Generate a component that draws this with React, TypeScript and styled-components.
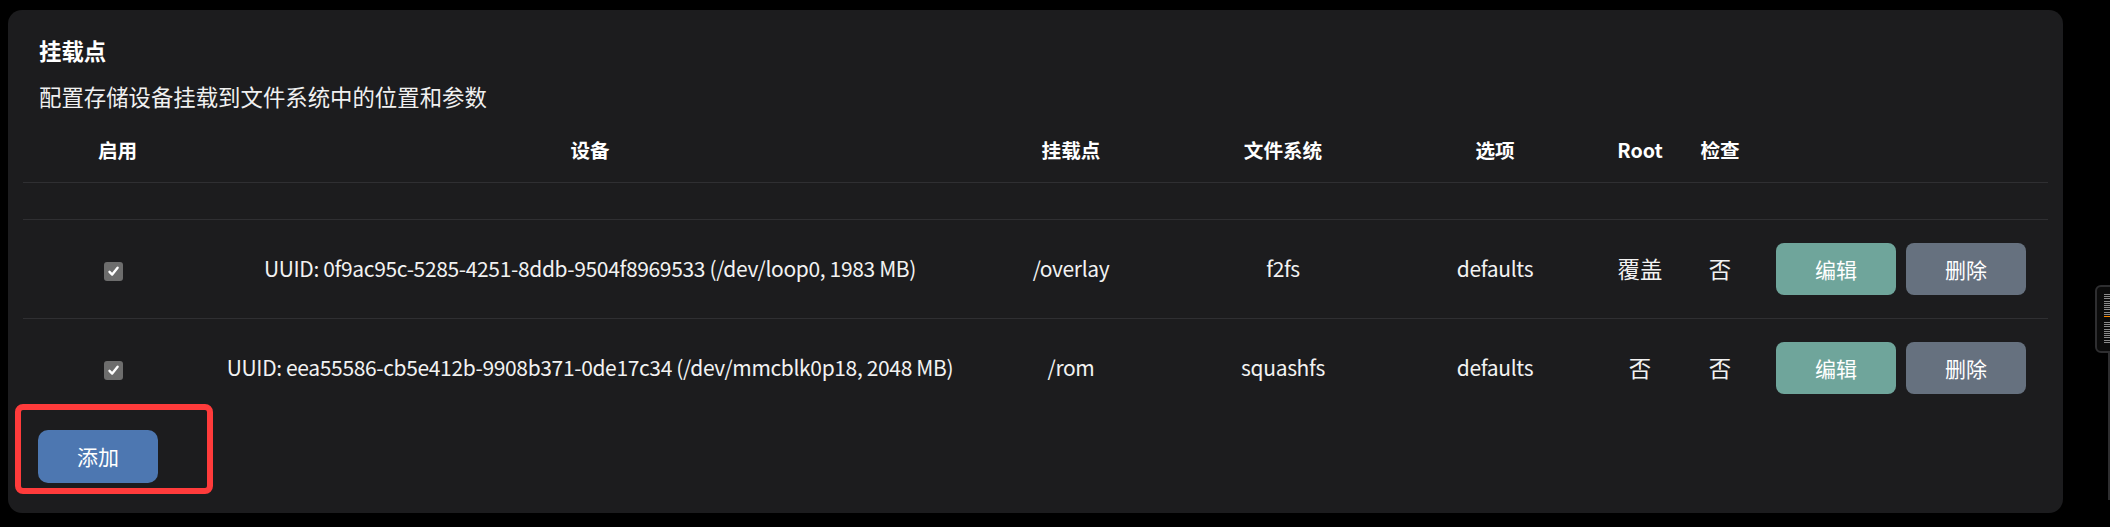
import React from "react";
import styled, { createGlobalStyle } from "styled-components";

const GlobalStyle = createGlobalStyle`
  html, body {
    margin: 0;
    padding: 0;
    background: #000;
  }
  body {
    font-family: "Noto Sans CJK SC", "Noto Sans", sans-serif;
    color: #f2f2f2;
    width: 2110px;
    height: 527px;
    overflow: hidden;
  }
`;

const Page = styled.div`
  position: relative;
  width: 2110px;
  height: 527px;
  padding: 10px 0 0 8px;
  box-sizing: border-box;
`;

const Card = styled.section`
  position: relative;
  width: 2055px;
  box-sizing: border-box;
  background: #1c1c1e;
  border-radius: 14px;
  padding: 24px 15px 30px 15px;
`;

const Title = styled.h3`
  margin: 0;
  padding-left: 16px;
  font-size: 22.4px;
  line-height: 1.5;
  font-weight: 700;
  color: #fff;
`;

const Subtitle = styled.p`
  margin: 12px 0 0 0;
  padding-left: 16px;
  font-size: 22.4px;
  line-height: 1.5;
  color: #f0f0f0;
`;

const Table = styled.table`
  margin-top: 6px;
  width: 2025px;
  table-layout: fixed;
  border-collapse: separate;
  border-spacing: 0;
`;

const Th = styled.th`
  padding: 16px 0 17px 0;
  font-size: 19.6px;
  line-height: 1.5;
  font-weight: 700;
  color: #fff;
  text-align: center;
  border-bottom: 1px solid #2f2f32;
`;

const EmptyCell = styled.td`
  height: 36px;
  padding: 0;
  border-bottom: 1px solid #2f2f32;
`;

// latin cells use a slightly tighter size, the reference renders them narrow
const Td = styled.td<{ $last?: boolean; $latin?: boolean }>`
  padding: 23px 0;
  height: 52px;
  font-size: ${(p) => (p.$latin ? "21px" : "22.4px")};
  letter-spacing: ${(p) => (p.$latin ? "-0.35px" : "normal")};
  line-height: 1.5;
  text-align: center;
  vertical-align: middle;
  white-space: nowrap;
  color: #f2f2f2;
  border-bottom: ${(p) => (p.$last ? "none" : "1px solid #2f2f32")};
`;

const ActionCell = styled(Td)`
  text-align: left;
  padding-left: 18px;
`;

const Actions = styled.div`
  display: flex;
  gap: 10px;
`;

const Check = styled.span`
  display: inline-flex;
  align-items: center;
  justify-content: center;
  width: 19px;
  height: 19px;
  margin-right: 9px;
  border-radius: 3px;
  background: #6d6d6d;
  vertical-align: middle;
`;

const Button = styled.button<{ $tone: "edit" | "remove" | "add" }>`
  width: 120px;
  height: 52px;
  border: none;
  border-radius: ${(p) => (p.$tone === "add" ? "10px" : "8px")};
  font-family: inherit;
  font-size: 21px;
  color: #fff;
  cursor: pointer;
  background: ${(p) =>
    p.$tone === "edit" ? "#6fa59b" : p.$tone === "remove" ? "#66717f" : "#4d77b1"};
`;

const Footer = styled.div`
  margin-top: 13px;
  padding-left: 15px;
`;

const AddButton = styled(Button)`
  height: 53px;
`;

const Highlight = styled.div`
  position: absolute;
  left: 7px;
  top: 394px;
  width: 198px;
  height: 90px;
  box-sizing: border-box;
  border: 6px solid #ff3b3b;
  border-radius: 8px;
  pointer-events: none;
`;

const Minimap = styled.div`
  position: absolute;
  left: 2095px;
  top: 285px;
  width: 30px;
  height: 68px;
  box-sizing: border-box;
  border: 2px solid #2e2e30;
  border-radius: 6px;
  background: #0b0b0b;
`;

const Ticks = styled.div<{ $top: number; $height: number }>`
  position: absolute;
  left: 7px;
  top: ${(p) => p.$top}px;
  width: 6px;
  height: ${(p) => p.$height}px;
  background: repeating-linear-gradient(
    to bottom,
    #8a8a8a 0px,
    #8a8a8a 1px,
    transparent 1px,
    transparent 2.2px
  );
`;

const Marker = styled.div`
  position: absolute;
  left: 7px;
  top: 29px;
  width: 6px;
  height: 1px;
  background: #ff8a00;
`;

const Rail = styled.div`
  position: absolute;
  left: 2108px;
  top: 353px;
  width: 2px;
  height: 147px;
  background: #2e2e30;
`;

const CheckMark = () => (
  <svg width="13" height="13" viewBox="0 0 13 13">
    <path d="M2.5 6.8 L5.2 9.6 L10.6 2.8" fill="none" stroke="#fff" strokeWidth="2.4" strokeLinecap="round" strokeLinejoin="round" />
  </svg>
);

interface Mount {
  device: string;
  target: string;
  fs: string;
  options: string;
  root: string;
  check: string;
}

const mounts: Mount[] = [
  {
    device: "UUID: 0f9ac95c-5285-4251-8ddb-9504f8969533 (/dev/loop0, 1983 MB)",
    target: "/overlay",
    fs: "f2fs",
    options: "defaults",
    root: "覆盖",
    check: "否",
  },
  {
    device: "UUID: eea55586-cb5e412b-9908b371-0de17c34 (/dev/mmcblk0p18, 2048 MB)",
    target: "/rom",
    fs: "squashfs",
    options: "defaults",
    root: "否",
    check: "否",
  },
];

const colWidths = [189, 756, 206, 218, 206, 84, 76, 290];

const App = () => {
  return (
    <Page>
      <GlobalStyle />
      <Card>
        <Title>挂载点</Title>
        <Subtitle>配置存储设备挂载到文件系统中的位置和参数</Subtitle>
        <Table>
          <colgroup>
            {colWidths.map((w, i) => (
              <col key={i} style={{ width: w }} />
            ))}
          </colgroup>
          <thead>
            <tr>
              <Th>启用</Th>
              <Th>设备</Th>
              <Th>挂载点</Th>
              <Th>文件系统</Th>
              <Th>选项</Th>
              <Th>Root</Th>
              <Th>检查</Th>
              <Th></Th>
            </tr>
          </thead>
          <tbody>
            <tr>
              <EmptyCell colSpan={8} />
            </tr>
            {mounts.map((m, i) => {
              const last = i === mounts.length - 1;
              return (
                <tr key={m.device}>
                  <Td $last={last}>
                    <Check>
                      <CheckMark />
                    </Check>
                  </Td>
                  <Td $last={last} $latin>{m.device}</Td>
                  <Td $last={last} $latin>{m.target}</Td>
                  <Td $last={last} $latin>{m.fs}</Td>
                  <Td $last={last} $latin>{m.options}</Td>
                  <Td $last={last}>{m.root}</Td>
                  <Td $last={last}>{m.check}</Td>
                  <ActionCell $last={last}>
                    <Actions>
                      <Button $tone="edit">编辑</Button>
                      <Button $tone="remove">删除</Button>
                    </Actions>
                  </ActionCell>
                </tr>
              );
            })}
          </tbody>
        </Table>
        <Footer>
          <AddButton $tone="add">添加</AddButton>
        </Footer>
        <Highlight />
      </Card>
      <Minimap>
        <Ticks $top={7} $height={21} />
        <Marker />
        <Ticks $top={35} $height={22} />
      </Minimap>
      <Rail />
    </Page>
  );
};

export default App;
